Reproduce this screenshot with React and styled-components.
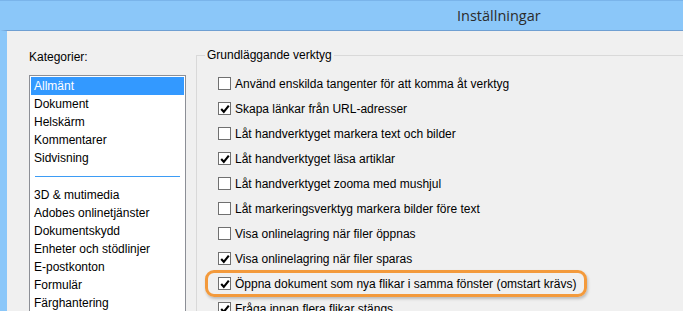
import styled, { createGlobalStyle } from 'styled-components';

const Global = createGlobalStyle`
  html, body { margin: 0; padding: 0; background: #f0f0f0; }
  body { font-family: "Liberation Sans", Arial, sans-serif; font-size: 12px; color: #000; }
`;

const categoriesTop = ['Allmänt', 'Dokument', 'Helskärm', 'Kommentarer', 'Sidvisning'];
const categoriesBottom = ['3D & mutimedia', 'Adobes onlinetjänster', 'Dokumentskydd', 'Enheter och stödlinjer', 'E-postkonton', 'Formulär', 'Färghantering', 'Granskning'];

const options = [
  { label: 'Använd enskilda tangenter för att komma åt verktyg', checked: false },
  { label: 'Skapa länkar från URL-adresser', checked: true },
  { label: 'Låt handverktyget markera text och bilder', checked: false },
  { label: 'Låt handverktyget läsa artiklar', checked: true },
  { label: 'Låt handverktyget zooma med mushjul', checked: false },
  { label: 'Låt markeringsverktyg markera bilder före text', checked: false },
  { label: 'Visa onlinelagring när filer öppnas', checked: false },
  { label: 'Visa onlinelagring när filer sparas', checked: true },
  { label: 'Öppna dokument som nya flikar i samma fönster (omstart krävs)', checked: true, highlight: true },
  { label: 'Fråga innan flera flikar stängs.', checked: true },
];

const Window = styled.div`
  width: 683px;
  height: 311px;
  overflow: hidden;
  display: flex;
  flex-direction: column;
`;

const TitleBar = styled.div`
  height: 29px;
  flex: none;
  background: #8bc7f9;
  border-top: 1px solid #7ab4ea;
  display: flex;
  align-items: center;
  padding-left: 457px;
  font-family: "Open Sans", "Noto Sans", sans-serif;
  font-size: 14.5px;
  color: #2b2b2b;
`;

const Body = styled.div`
  flex: 1;
  display: flex;
  border-left: 7px solid #8bc7f9;
  border-top: 1px solid #6f9fd2;
  background: #f0f0f0;
  min-height: 0;
`;

const LeftPane = styled.div`
  width: 179px;
  flex: none;
  padding: 18px 0 0 22px;
  box-sizing: border-box;
  display: flex;
  flex-direction: column;
`;

const Label = styled.div`
  height: 16px;
  line-height: 16px;
  margin-bottom: 10px;
`;

const ListBox = styled.div`
  width: 157px;
  border: 1px solid #8c8f96;
  background: #fff;
  padding: 1px;
  box-sizing: border-box;
  flex: 1;
`;

const Item = styled.div`
  height: 18px;
  line-height: 18px;
  padding-left: 3px;
  background: ${p => (p.$selected ? '#3399ff' : 'transparent')};
  color: ${p => (p.$selected ? '#fff' : '#000')};
  white-space: nowrap;
`;

const Separator = styled.div`
  height: 1px;
  background: #3d9cf5;
  margin: 9px 4px 9px 4px;
`;

const Group = styled.div`
  flex: 1;
  margin-top: 24px;
  margin-left: 10px;
  border-top: 1px solid #d9d9d9;
  border-left: 1px solid #d9d9d9;
  position: relative;
  padding: 15px 0 0 21px;
`;

const Legend = styled.div`
  position: absolute;
  top: -9px;
  left: 8px;
  background: #f0f0f0;
  padding: 0 2px;
  line-height: 16px;
`;

const Row = styled.div`
  height: 25px;
  display: flex;
  align-items: center;
`;

const Highlight = styled.div`
  display: flex;
  align-items: center;
  height: 21px;
  margin-left: -13px;
  padding: 0 8px 0 10px;
  border: 3px solid #f39a3c;
  border-radius: 9px;
  box-shadow: 1px 2px 3px rgba(0, 0, 0, 0.22);
`;

const Box = styled.span`
  width: 11px;
  height: 11px;
  flex: none;
  border: 1px solid #707070;
  background: #fff;
  margin-right: 4px;
  display: flex;
  align-items: center;
  justify-content: center;
`;

const Text = styled.span`
  white-space: nowrap;
`;

const Check = () => (
  <svg width="10" height="10" viewBox="0 0 10 10">
    <path d="M1.2 5 L3.8 7.8 L8.8 1.6" fill="none" stroke="#000" strokeWidth="2.1" />
  </svg>
);

const Option = ({ label, checked }) => (
  <>
    <Box>{checked && <Check />}</Box>
    <Text>{label}</Text>
  </>
);

export default function App() {
  return (
    <Window>
      <Global />
      <TitleBar>Inställningar</TitleBar>
      <Body>
        <LeftPane>
          <Label>Kategorier:</Label>
          <ListBox>
            {categoriesTop.map((c, i) => (
              <Item key={c} $selected={i === 0}>{c}</Item>
            ))}
            <Separator />
            {categoriesBottom.map(c => (
              <Item key={c}>{c}</Item>
            ))}
          </ListBox>
        </LeftPane>
        <Group>
          <Legend>Grundläggande verktyg</Legend>
          {options.map(o => (
            <Row key={o.label}>
              {o.highlight ? (
                <Highlight><Option {...o} /></Highlight>
              ) : (
                <Option {...o} />
              )}
            </Row>
          ))}
        </Group>
      </Body>
    </Window>
  );
}
